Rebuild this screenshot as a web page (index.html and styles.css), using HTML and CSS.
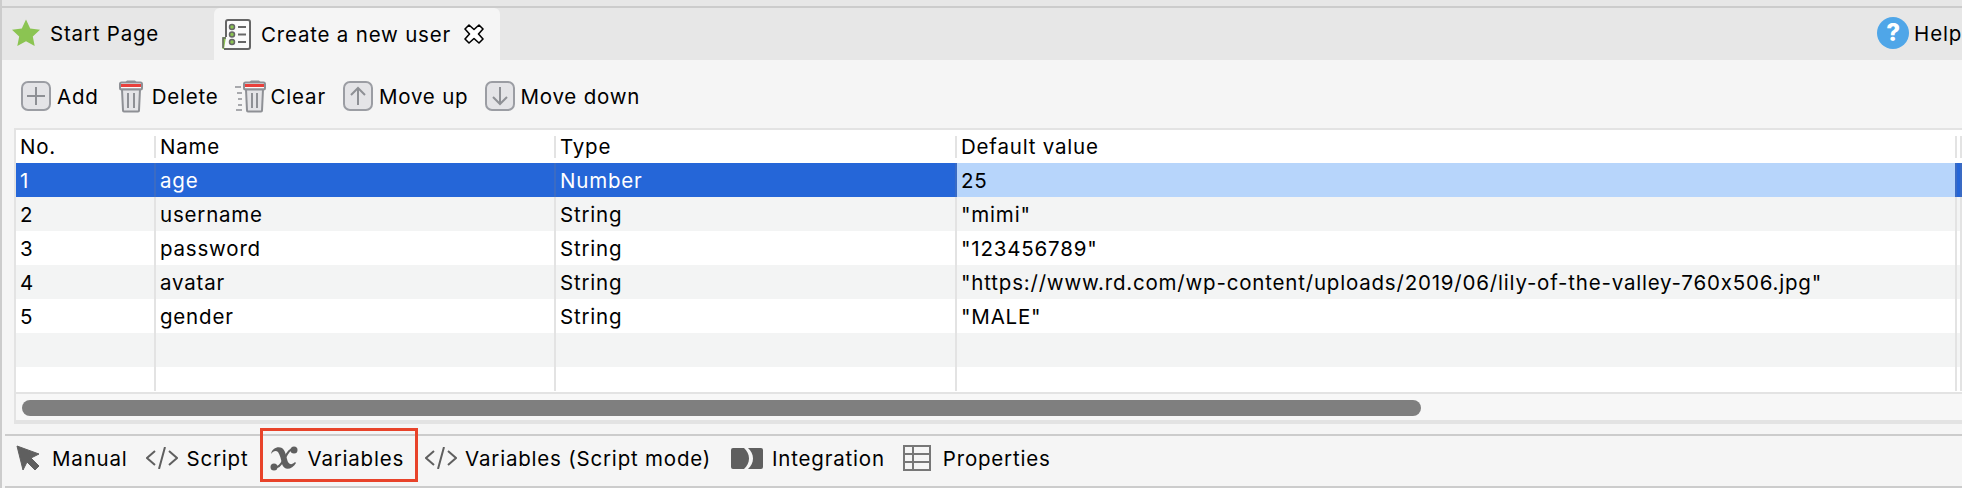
FILE: index.html
```html
<!DOCTYPE html>
<html>
<head>
    <meta charset="utf-8" />
    <title>Create a new user</title>
    <link rel="stylesheet" href="styles.css">
</head>
<body>
<div class="window">
    <!-- editor tabs -->
    <div class="tabs">
        <div class="tab">
            <svg class="ico-star" width="28" height="28" viewBox="0 0 28 28"><path d="M14 0.500l4.200 9 9.800 1.200-7.200 6.700 1.900 9.700-8.700-4.800-8.700 4.800 1.900-9.700L0 10.700l9.800-1.200z" fill="#8bc452"/></svg>
            <span>Start Page</span>
        </div>
        <div class="tab tab-active">
            <svg class="ico-form" width="29" height="31" viewBox="0 0 29 31">
                <rect x="0.500" y="18" width="4" height="12" fill="#8bc452"/>
                <path d="M4 18V3a2 2 0 0 1 2-2h20a2 2 0 0 1 2 2v25a2 2 0 0 1-2 2H2" fill="#fafafa" stroke="#666" stroke-width="2"/>
                <path d="M1 29V19h3" fill="none" stroke="#666" stroke-width="1.500"/>
                <g fill="#8bc452" stroke="#666" stroke-width="1.500"><circle cx="10" cy="8" r="2.500"/><circle cx="10" cy="15.500" r="2.500"/><circle cx="10" cy="23" r="2.500"/></g>
                <path d="M16 8h8M16 15.500h8M16 23h8" stroke="#666" stroke-width="2"/>
            </svg>
            <span>Create a new user</span>
            <svg class="ico-close" width="20" height="20" viewBox="0 0 20 20"><path d="M5 1l5 4.500L15 1l4 4-4.500 5 4.500 5-4 4-5-4.500L5 19l-4-4 4.500-5L1 5z" fill="#fff" stroke="#000" stroke-width="1.600" stroke-linejoin="round"/></svg>
        </div>
        <div class="help">
            <span class="help-badge">?</span>
            <span>Help</span>
        </div>
    </div>

    <!-- toolbar -->
    <div class="toolbar">
        <div class="tool tool-add">
            <svg width="30" height="30" viewBox="0 0 30 30"><rect x="1" y="1" width="28" height="28" rx="6" fill="#e4e4e7" stroke="#9b9da3" stroke-width="2"/><path d="M15 6v18M6 15h18" stroke="#8e9095" stroke-width="2"/></svg>
            <span>Add</span>
        </div>
        <div class="tool tool-delete">
            <svg width="24" height="34" viewBox="0 0 24 34">
                <path d="M8 1.500h8l2 2H6z" fill="#8e9095"/>
                <rect x="1" y="3.500" width="22" height="7" rx="1.500" fill="#fafafa" stroke="#8e9095" stroke-width="2"/>
                <rect x="2" y="5" width="20" height="3" fill="#e9403c"/>
                <path d="M3 10.500l1 21a1 1 0 0 0 1 1h14a1 1 0 0 0 1-1l1-21z" fill="#e4e4e7" stroke="#8e9095" stroke-width="2"/>
                <path d="M9 14v15M15 14v15" stroke="#8e9095" stroke-width="2"/>
            </svg>
            <span>Delete</span>
        </div>
        <div class="tool tool-clear">
            <svg width="31" height="34" viewBox="0 0 31 34">
                <path d="M0 8h6M2 14h5M3 20h4M3 26h4M1 31h6" stroke="#8e9095" stroke-width="1.500"/>
                <path d="M16 1.500h8l2 2H14z" fill="#8e9095"/>
                <rect x="9" y="3.500" width="21" height="7" rx="1.500" fill="#fafafa" stroke="#8e9095" stroke-width="2"/>
                <rect x="10" y="5" width="19" height="3" fill="#e9403c"/>
                <path d="M11 10.500l1 21a1 1 0 0 0 1 1h13a1 1 0 0 0 1-1l1-21z" fill="#e4e4e7" stroke="#8e9095" stroke-width="2"/>
                <path d="M17 14v15M22 14v15" stroke="#8e9095" stroke-width="2"/>
            </svg>
            <span>Clear</span>
        </div>
        <div class="tool tool-up">
            <svg width="30" height="30" viewBox="0 0 30 30"><rect x="1" y="1" width="28" height="28" rx="6" fill="#e4e4e7" stroke="#9b9da3" stroke-width="2"/><path d="M15 24V7M8 14l7-7 7 7" fill="none" stroke="#8e9095" stroke-width="2"/></svg>
            <span>Move up</span>
        </div>
        <div class="tool tool-down">
            <svg width="30" height="30" viewBox="0 0 30 30"><rect x="1" y="1" width="28" height="28" rx="6" fill="#e4e4e7" stroke="#9b9da3" stroke-width="2"/><path d="M15 6v17M8 16l7 7 7-7" fill="none" stroke="#8e9095" stroke-width="2"/></svg>
            <span>Move down</span>
        </div>
    </div>

    <!-- variable table -->
    <div class="panel">
        <div class="grid-wrap">
            <table class="grid">
                <colgroup>
                    <col class="col-no"><col class="col-name"><col class="col-type"><col class="col-value"><col class="col-rest">
                </colgroup>
                <thead>
                    <tr><th>No.</th><th>Name</th><th>Type</th><th>Default value</th><th></th></tr>
                </thead>
                <tbody>
                    <tr class="selected"><td>1</td><td>age</td><td>Number</td><td class="editing">25</td><td></td></tr>
                    <tr class="odd"><td>2</td><td>username</td><td>String</td><td>"mimi"</td><td></td></tr>
                    <tr><td>3</td><td>password</td><td>String</td><td>"123456789"</td><td></td></tr>
                    <tr class="odd"><td>4</td><td>avatar</td><td>String</td><td>"https://www.rd.com/wp-content/uploads/2019/06/lily-of-the-valley-760x506.jpg"</td><td></td></tr>
                    <tr><td>5</td><td>gender</td><td>String</td><td>"MALE"</td><td></td></tr>
                    <tr class="odd"><td></td><td></td><td></td><td></td><td></td></tr>
                    <tr class="last"><td></td><td></td><td></td><td></td><td></td></tr>
                </tbody>
            </table>
        </div>
        <div class="hscroll"><div class="hscroll-thumb"></div></div>
    </div>

    <!-- bottom tabs -->
    <div class="modes">
        <div class="mode mode-manual">
            <svg width="24" height="26" viewBox="0 0 24 26"><path d="M1 1l22 8-8 4 8 8-4 4-8-8-4 8z" fill="#5f5f5f" stroke="#5f5f5f" stroke-linejoin="round"/></svg>
            <span>Manual</span>
        </div>
        <div class="mode mode-script">
            <svg width="32" height="22" viewBox="0 0 32 22"><path d="M9 4l-8 7 8 7M23 4l8 7-8 7M19 0l-6 22" fill="none" stroke="#5f5f5f" stroke-width="2"/></svg>
            <span>Script</span>
        </div>
        <div class="mode mode-vars">
            <svg width="28" height="26" viewBox="0 0 28 26">
                <path d="M1 9C2 3 8 1 12 3c3 2 4 7 5 11 1 5 4 7 8 3l1 1c-4 7-12 8-14 1-1-5-2-9-4-12-2-2-5-1-7 2z" fill="#5f5f5f"/>
                <path d="M5 22c3 1 5-1 8-6l4-7c3-5 5-5 8-4" fill="none" stroke="#5f5f5f" stroke-width="2.200"/>
                <circle cx="4" cy="22" r="3.500" fill="#5f5f5f"/><circle cx="24" cy="5" r="3.500" fill="#5f5f5f"/>
            </svg>
            <span>Variables</span>
        </div>
        <div class="mode mode-script2">
            <svg width="32" height="22" viewBox="0 0 32 22"><path d="M9 4l-8 7 8 7M23 4l8 7-8 7M19 0l-6 22" fill="none" stroke="#5f5f5f" stroke-width="2"/></svg>
            <span>Variables (Script mode)</span>
        </div>
        <div class="mode mode-integration">
            <svg width="32" height="21" viewBox="0 0 32 21"><path d="M2 0h11c3 3 5 6 5 10.500S16 18 13 21H2a2 2 0 0 1-2-2V2a2 2 0 0 1 2-2zM17 0h13a2 2 0 0 1 2 2v17a2 2 0 0 1-2 2H17c3-3 5-6 5-10.500S20 3 17 0z" fill="#5f5f5f"/></svg>
            <span>Integration</span>
        </div>
        <div class="mode mode-props">
            <svg width="28" height="26" viewBox="0 0 28 26"><path d="M1 1h26v24H1zM1 9h26M1 17h26M10 1v24" fill="none" stroke="#777" stroke-width="2"/></svg>
            <span>Properties</span>
        </div>
    </div>
</div>
</body>
</html>
```

FILE: styles.css
```css
html, body {
    margin: 0;
    padding: 0;
    overflow: hidden;
}

body {
    width: 1962px;
    height: 488px;
    font-family: Inter, "Liberation Sans", sans-serif;
    font-size: 20.5px;
    letter-spacing: 0.8px;
    font-variant-ligatures: none;
    font-feature-settings: "calt" 0;
    color: #000;
    background: #f5f5f5;
}

svg {
    display: block;
    flex: none;
}

.window {
    height: 488px;
    box-sizing: border-box;
    border-left: 2px solid #ccc;
    background: #f5f5f5;
    display: flex;
    flex-direction: column;
    overflow: hidden;
}

/* tabs */
.tabs {
    height: 54px;
    flex: none;
    margin-left: -2px;
    padding-left: 2px;
    background: #e7e7e7;
    border-top: 6px solid #e7e7e7;
    display: flex;
    align-items: stretch;
    box-shadow: inset 0 2px 0 #ccc;
}

.tab {
    width: 212px;
    box-sizing: border-box;
    display: flex;
    align-items: center;
    padding-left: 10px;
    gap: 10px;
}

.tab-active {
    width: 286px;
    margin-top: 2px;
    padding-left: 8px;
    background: #f5f5f5;
    border-radius: 6px 6px 0 0;
    gap: 10px;
}

.ico-close {
    margin-left: 3px;
}

.help {
    margin-left: auto;
    display: flex;
    align-items: center;
    gap: 5px;
}

.help-badge {
    width: 32px;
    height: 32px;
    border-radius: 50%;
    background: #4fa6e8;
    color: #fff;
    font-weight: 800;
    font-size: 24px;
    line-height: 32px;
    letter-spacing: 0;
    text-align: center;
}

/* toolbar */
.toolbar {
    height: 68px;
    flex: none;
    display: flex;
    align-items: center;
    padding-left: 19px;
    padding-top: 4px;
    box-sizing: border-box;
}

.tool {
    display: flex;
    align-items: center;
    gap: 6px;
    margin-right: 20px;
}

.tool-delete {
    gap: 9px;
    margin-right: 16px;
}

.tool-clear {
    gap: 5px;
    margin-right: 17px;
}

.tool-up {
    gap: 6px;
    margin-right: 17px;
}

.tool-down {
    gap: 5px;
}

/* table */
.panel {
    height: 296px;
    flex: none;
    margin-left: 12px;
    box-sizing: border-box;
    border: 2px solid #e3e3e3;
    border-right: 0;
    border-bottom-width: 4px;
    background: #f7f7f7;
    overflow: hidden;
}

.grid-wrap {
    height: 262px;
    background: #fff;
    overflow: hidden;
    border-bottom: 2px solid #e3e3e3;
}

.grid {
    table-layout: fixed;
    border-collapse: separate;
    border-spacing: 0;
    width: 1946px;
}

.col-no { width: 140px; }
.col-name { width: 400px; }
.col-type { width: 401px; }
.col-value { width: 1000px; }
.col-rest { width: 5px; }

.grid th {
    height: 33px;
    padding: 0 0 0 4px;
    font-weight: normal;
    text-align: left;
    background: linear-gradient(#e3e3e3, #e3e3e3) right center / 2px 22px no-repeat;
    white-space: nowrap;
}

.grid td {
    height: 34px;
    padding: 0 0 0 4px;
    border-right: 2px solid #e3e3e3;
    white-space: nowrap;
}

.grid tr.last td {
    height: 24px;
}

.grid tr.odd td {
    background: #f3f4f4;
}

.grid tr.selected td {
    background: #2566d8;
    color: #fff;
    border-right-color: #3a6bc4;
}

.grid tr.selected td.editing {
    background: #b7d5fb;
    color: #000;
}

.hscroll {
    height: 26px;
    padding-top: 6px;
    box-sizing: border-box;
    padding-left: 6px;
}

.hscroll-thumb {
    width: 1399px;
    height: 16px;
    border-radius: 8px;
    background: #7f7f7f;
}

/* bottom tabs */
.modes {
    height: 54px;
    flex: none;
    margin-top: 10px;
    margin-left: 3px;
    box-sizing: border-box;
    border-top: 2px solid #ccc;
    border-bottom: 2px solid #ccc;
    display: flex;
    align-items: center;
    padding-left: 11px;
    padding-bottom: 6px;
}

.mode {
    display: flex;
    align-items: center;
    position: relative;
    margin-right: 20px;
    gap: 9px;
}

.mode-manual { gap: 12px; margin-right: 18px; }
.mode-script { gap: 9px; margin-right: 22px; }
.mode-vars { margin-right: 21px; }
.mode-script2 { gap: 8px; margin-right: 20px; }
.mode-integration { gap: 9px; margin-right: 18px; }
.mode-props { gap: 12px; }

/* red annotation round the Variables tab */
.mode-vars::after {
    content: "";
    position: absolute;
    left: -10px;
    right: -14px;
    top: -17px;
    bottom: -11px;
    border: 3px solid #e8432a;
}
```
